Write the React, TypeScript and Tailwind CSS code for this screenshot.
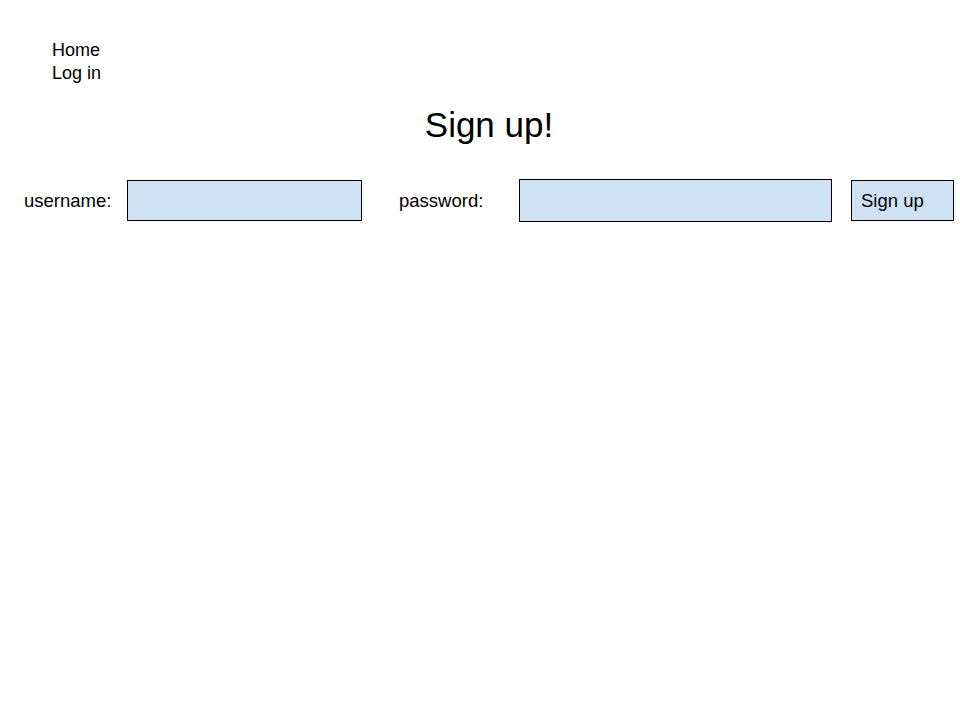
export default function App() {
  return (
    <div className="min-h-screen bg-white text-black font-['Liberation_Sans',Arial,sans-serif]">
      {/* nav links */}
      <nav className="pt-[39px] pl-[52px] flex flex-col text-[18px] leading-[23px]">
        <a href="#" className="w-fit">Home</a>
        <a href="#" className="w-fit">Log in</a>
      </nav>

      <h1 className="mt-[22px] h-[36px] text-center text-[35px] leading-[36px] pl-[18px]">Sign up!</h1>

      <form className="mt-[36px] flex items-center text-[18.5px]" onSubmit={(e) => e.preventDefault()}>
        <label className="ml-[24px] w-[103px]">username:</label>
        <input
          type="text"
          className="w-[235px] h-[41px] border border-black bg-[#cfe2f3] outline-none"
        />
        <label className="ml-[37px] w-[120px]">password:</label>
        <input
          type="password"
          className="w-[313px] h-[43px] border border-black bg-[#cfe2f3] outline-none"
        />
        <button
          type="submit"
          className="ml-[19px] w-[103px] h-[41px] border border-black bg-[#cfe2f3] text-left pl-[9px]"
        >
          Sign up
        </button>
      </form>
    </div>
  )
}
